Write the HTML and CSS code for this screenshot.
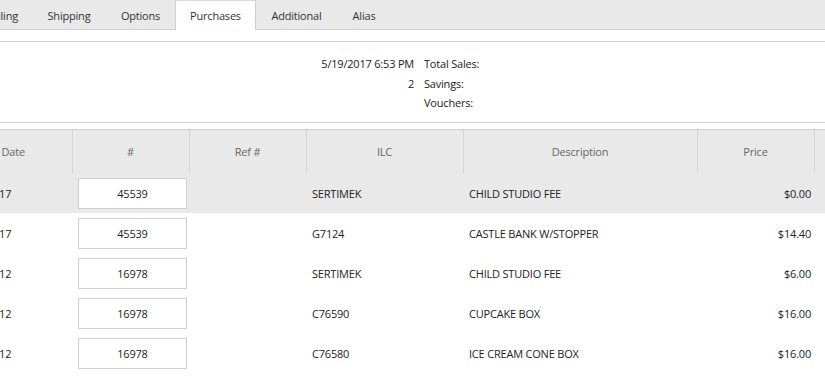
FILE: index.html
```html
<!DOCTYPE html>
<html>
<head>
<meta charset="utf-8">
<link rel="stylesheet" href="styles.css">
</head>
<body>
<div class="page">
  <nav class="tabs">
    <div class="tab tab-billing">Billing</div>
    <div class="tab tab-shipping">Shipping</div>
    <div class="tab tab-options">Options</div>
    <div class="tab tab-purchases active">Purchases</div>
    <div class="tab tab-additional">Additional</div>
    <div class="tab tab-alias">Alias</div>
  </nav>

  <section class="summary">
    <div class="sum-val">5/19/2017 6:53 PM</div><div class="sum-label">Total Sales:</div>
    <div class="sum-val">2</div><div class="sum-label">Savings:</div>
    <div class="sum-val"></div><div class="sum-label">Vouchers:</div>
  </section>

  <table class="grid">
    <colgroup>
      <col class="c-date"><col class="c-num"><col class="c-ref"><col class="c-ilc"><col class="c-desc"><col class="c-price"><col class="c-extra">
    </colgroup>
    <thead>
      <tr>
        <th>Date</th><th>#</th><th>Ref #</th><th>ILC</th><th>Description</th><th>Price</th><th></th>
      </tr>
    </thead>
    <tbody>
      <tr class="sel">
        <td>5/19/2017</td><td><div class="box">45539</div></td><td></td><td>SERTIMEK</td><td>CHILD STUDIO FEE</td><td class="price">$0.00</td><td></td>
      </tr>
      <tr>
        <td>5/19/2017</td><td><div class="box">45539</div></td><td></td><td>G7124</td><td>CASTLE BANK W/STOPPER</td><td class="price">$14.40</td><td></td>
      </tr>
      <tr>
        <td>3/10/2012</td><td><div class="box">16978</div></td><td></td><td>SERTIMEK</td><td>CHILD STUDIO FEE</td><td class="price">$6.00</td><td></td>
      </tr>
      <tr>
        <td>3/10/2012</td><td><div class="box">16978</div></td><td></td><td>C76590</td><td>CUPCAKE BOX</td><td class="price">$16.00</td><td></td>
      </tr>
      <tr>
        <td>3/10/2012</td><td><div class="box">16978</div></td><td></td><td>C76580</td><td>ICE CREAM CONE BOX</td><td class="price">$16.00</td><td></td>
      </tr>
    </tbody>
  </table>
</div>
</body>
</html>
```

FILE: styles.css
```css
html, body {
  margin: 0;
  padding: 0;
  overflow: hidden;
  background: #fff;
}
body {
  font-family: "Open Sans", "Noto Sans", sans-serif;
  font-size: 11px;
  letter-spacing: -0.2px;
  color: #222;
  width: 825px;
  height: 387px;
}
.page {
  width: 825px;
  overflow: hidden;
}
.tabs {
  display: flex;
  height: 29px;
  background: #e9e9e9;
  border-bottom: 1px solid #cfcfcf;
}
.tab {
  line-height: 31px;
  height: 29px;
  color: #333;
  white-space: nowrap;
  text-align: center;
  box-sizing: border-box;
  flex: none;
}
.tab-billing { width: 72px; margin-left: -40px; text-align: right; padding-right: 14px; }
.tab-shipping { width: 74px; }
.tab-options { width: 69px; }
.tab-purchases { width: 81px; }
.tab-additional { width: 81px; }
.tab-alias { width: 54px; }
.tab.active {
  background: #fff;
  border-left: 1px solid #cfcfcf;
  border-right: 1px solid #cfcfcf;
  border-top: 1px solid #dcdcdc;
  height: 30px;
  line-height: 30px;
}
.summary {
  margin-top: 11px;
  border-top: 1px solid #cfcfcf;
  border-bottom: 1px solid #cfcfcf;
  height: 66px;
  display: grid;
  grid-template-columns: 414px auto;
  grid-auto-rows: 19.5px;
  column-gap: 10px;
  padding-top: 14px;
  align-content: start;
}
.sum-val {
  text-align: right;
}
.grid {
  margin-top: 6px;
  margin-left: -45px;
  border-collapse: collapse;
  table-layout: fixed;
  width: 976px;
}
.c-date, .c-num, .c-ref, .c-price, .c-extra { width: 117px; }
.c-ilc { width: 157px; }
.c-desc { width: 234px; }
.grid th {
  background: #e9e9e9;
  font-weight: normal;
  color: #666;
  height: 43px;
  padding: 0;
  border-top: 1px solid #cfcfcf;
  border-left: 1px solid #d4d4d4;
  text-align: center;
}
.grid th:first-child { border-left: none; }
.grid td {
  height: 40px;
  padding: 0 6px;
  text-align: left;
  white-space: nowrap;
  overflow: hidden;
}
.grid tr.sel td { background: #e9e9e9; }
.grid td.price {
  text-align: right;
  padding-right: 3px;
}
.box {
  width: 109px;
  height: 31px;
  box-sizing: border-box;
  border: 1px solid #cfcfcf;
  background: #fff;
  text-align: center;
  line-height: 29px;
  margin-top: 1px;
}
```
